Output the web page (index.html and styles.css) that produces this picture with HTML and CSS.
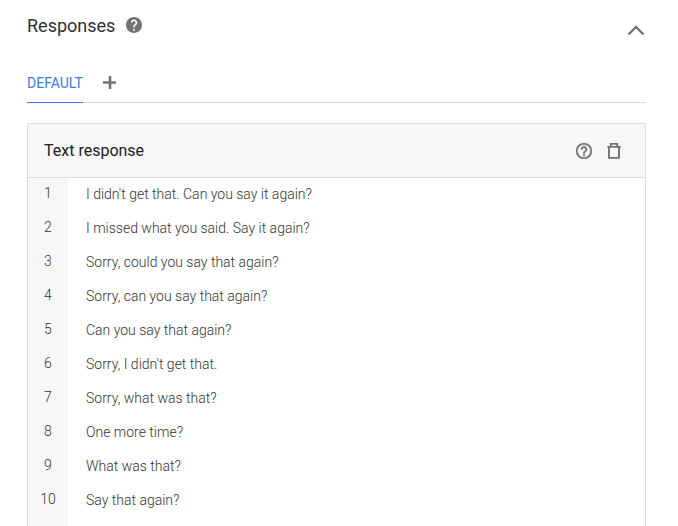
FILE: index.html
```html
<!DOCTYPE html>
<html lang="en">
<head>
<meta charset="utf-8">
<meta name="viewport" content="width=device-width, initial-scale=1">
<title>Responses</title>
<link rel="stylesheet" href="styles.css">
</head>
<body>
<main class="responses">
  <header class="section-header">
    <h1 class="section-title">Responses</h1>
    <button class="icon-button" type="button" aria-label="Help">
      <svg class="icon icon-help" viewBox="2 2 20 20"><path d="M12 2C6.480 2 2 6.480 2 12s4.480 10 10 10 10-4.480 10-10S17.520 2 12 2zm1 17h-2v-2h2v2zm2.070-7.750l-.9.920C13.450 12.900 13 13.500 13 15h-2v-.5c0-1.100.45-2.100 1.170-2.830l1.240-1.260c.37-.36.59-.86.59-1.410 0-1.100-.9-2-2-2s-2 .9-2 2H8c0-2.210 1.790-4 4-4s4 1.790 4 4c0 .88-.36 1.680-.93 2.250z"/></svg>
    </button>
    <button class="icon-button collapse" type="button" aria-label="Collapse">
      <svg class="icon icon-collapse" viewBox="0 0 18 12"><path d="M1.500 10.500L9 3l7.500 7.500" fill="none" stroke="currentColor" stroke-width="2.400"/></svg>
    </button>
  </header>
  <nav class="tabs">
    <a class="tab" href="#default" aria-current="page">DEFAULT</a>
    <button class="icon-button" type="button" aria-label="Add integration">
      <svg class="icon icon-add" viewBox="0 0 14 14"><path d="M7 0v13M0 6.500h13" stroke="currentColor" stroke-width="2.600"/></svg>
    </button>
  </nav>
  <section class="panel" id="default">
    <header class="panel-header">
      <h2 class="panel-title">Text response</h2>
      <button class="icon-button" type="button" aria-label="About text responses">
        <svg class="icon icon-help" viewBox="2 2 20 20"><path d="M11 18h2v-2h-2v2zm1-16C6.480 2 2 6.480 2 12s4.480 10 10 10 10-4.480 10-10S17.520 2 12 2zm0 18c-4.410 0-8-3.590-8-8s3.590-8 8-8 8 3.590 8 8-3.590 8-8 8zm0-14c-2.210 0-4 1.790-4 4h2c0-1.100.9-2 2-2s2 .9 2 2c0 2-3 1.750-3 5h2c0-2.250 3-2.500 3-5 0-2.210-1.790-4-4-4z" stroke="currentColor" stroke-width=".5"/></svg>
      </button>
      <button class="icon-button" type="button" aria-label="Delete">
        <svg class="icon icon-delete" viewBox="0 0 14 16"><path d="M3.800 3.500V.9H10.200v2.600M.3 3.900h13.400M2 3.900v11h10v-11" fill="none" stroke="currentColor" stroke-width="1.900"/></svg>
      </button>
    </header>
    <ol class="variants">
      <li class="variant"><span class="number">1</span><span class="phrase">I didn't get that. Can you say it again?</span></li>
      <li class="variant"><span class="number">2</span><span class="phrase">I missed what you said. Say it again?</span></li>
      <li class="variant"><span class="number">3</span><span class="phrase">Sorry, could you say that again?</span></li>
      <li class="variant"><span class="number">4</span><span class="phrase">Sorry, can you say that again?</span></li>
      <li class="variant"><span class="number">5</span><span class="phrase">Can you say that again?</span></li>
      <li class="variant"><span class="number">6</span><span class="phrase">Sorry, I didn't get that.</span></li>
      <li class="variant"><span class="number">7</span><span class="phrase">Sorry, what was that?</span></li>
      <li class="variant"><span class="number">8</span><span class="phrase">One more time?</span></li>
      <li class="variant"><span class="number">9</span><span class="phrase">What was that?</span></li>
      <li class="variant"><span class="number">10</span><span class="phrase">Say that again?</span></li>
    </ol>
  </section>
</main>
</body>
</html>
```
FILE: styles.css
```css
* {
  box-sizing: border-box;
}

body {
  margin: 0;
  background: #fff;
  color: #2b303b;
  font-family: Roboto, "Liberation Sans", sans-serif;
}

.responses {
  display: flex;
  flex-direction: column;
  min-height: 100vh;
  padding: 11px 32px 0 27px;
}

.section-header {
  display: flex;
  align-items: center;
  gap: 11px;
  height: 28px;
}

.section-title {
  margin: 0;
  font-size: 18px;
  font-weight: 400;
}

.icon-button {
  display: flex;
  padding: 0;
  border: 0;
  background: none;
  color: #737373;
  cursor: pointer;
}

.icon {
  display: block;
  fill: currentColor;
}

.icon-help {
  width: 16px;
  height: 16px;
}

.icon-collapse {
  width: 18px;
  height: 12px;
}

.icon-add {
  width: 14px;
  height: 14px;
}

.icon-delete {
  width: 14px;
  height: 16px;
}

.collapse {
  align-self: flex-end;
  margin: 0 1px 3px auto;
}

.tabs {
  display: flex;
  align-items: center;
  gap: 20px;
  height: 40px;
  margin-top: 24px;
  border-bottom: 1px solid #dadada;
}

.tab {
  height: 40px;
  border-bottom: 1px solid #3b7de9;
  color: #3b7de9;
  font-size: 14px;
  line-height: 40px;
  text-decoration: none;
}

.panel {
  display: flex;
  flex: 1;
  flex-direction: column;
  margin-top: 20px;
  border: 1px solid #dadada;
  border-bottom: 0;
  border-radius: 2px 2px 0 0;
}

.panel-header {
  display: flex;
  align-items: center;
  gap: 15px;
  height: 54px;
  padding: 0 24px 0 16px;
  border-bottom: 1px solid #dadada;
  background: #f7f7f7;
}

.panel-title {
  flex: 1;
  margin: 0;
  color: #212121;
  font-size: 16px;
  font-weight: 400;
}

.variants {
  flex: 1;
  margin: 0;
  padding: 0;
  background: linear-gradient(to right, #f7f7f7 40px, #fff 40px);
  list-style: none;
}

.variant {
  display: flex;
  height: 34px;
  color: #333;
  font-size: 14px;
  font-weight: 300;
}

.number {
  width: 40px;
  line-height: 30px;
  text-align: center;
}

.phrase {
  padding-left: 18px;
  line-height: 32px;
}
```
